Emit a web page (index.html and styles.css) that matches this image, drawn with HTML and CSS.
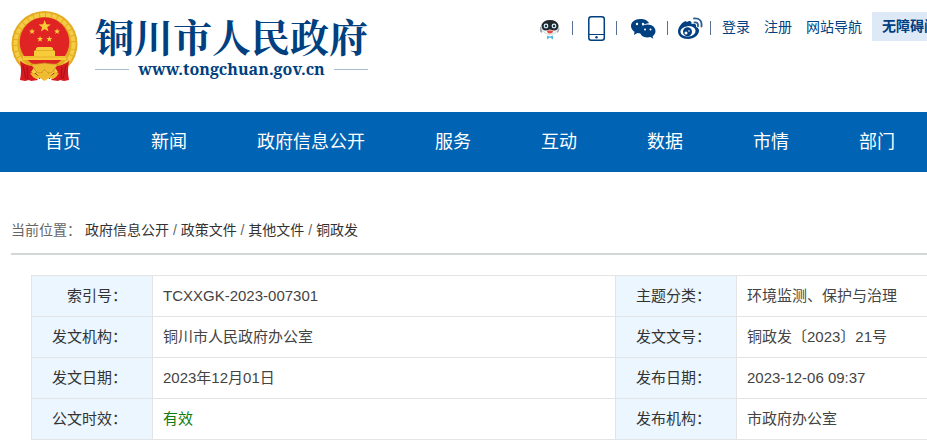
FILE: index.html
```html
<!DOCTYPE html>
<html lang="zh-CN">
<head>
<meta charset="utf-8">
<title>铜川市人民政府</title>
<link rel="stylesheet" href="styles.css">
</head>
<body>
<header class="header">
  <a class="brand" href="#">
    <svg class="emblem" viewBox="0 0 67 72" width="67" height="72" aria-hidden="true">
      <circle cx="33.500" cy="33" r="33" fill="#e3ac20"/>
      <circle cx="33.500" cy="33" r="29" fill="none" stroke="#f4cc45" stroke-width="4" stroke-dasharray="5 1"/>
      <circle cx="33.500" cy="31" r="24.800" fill="#e02323"/>
      <g fill="#f8cc39">
        <path id="star" d="M33.700 9l1.500 4.300 4.600.1-3.600 2.800 1.300 4.400-3.800-2.600-3.800 2.600 1.300-4.400-3.600-2.800 4.600-.1z"/>
        <use href="#star" transform="translate(4.200 12.800) scale(.5)"/>
        <use href="#star" transform="translate(29.200 12.800) scale(.5)"/>
        <use href="#star" transform="translate(12.200 20.400) scale(.5)"/>
        <use href="#star" transform="translate(21.500 20.400) scale(.5)"/>
        <path d="M25 37l2-1h13l2 1v2l2 1v5h11v4H12v-4h11v-5l2-1z"/>
      </g>
      <path d="M25 39.500h17M13 46h42" stroke="#dca023" stroke-width=".7"/>
      <path d="M9 50q8 6 15 5l-4 6 7 8-7 1-2-1-4 1-5-1q2-9 0-19zM58 50q-8 6-15 5l4 6-7 8 7 1 2-1 4 1 5-1q-2-9 0-19z" fill="#d71920"/>
      <path d="M12 54l3 14M16 56l1 12M55 54l-3 14M51 56l-1 12M24 62l5 6M43 62l-5 6" stroke="#a51219" fill="none"/>
      <path d="M20 53h6l7.500-1 7.500 1h6l-4 6q-2 4-6 3l-3.500-3-3.500 3q-4 1-6-3z" fill="#f0bd32" stroke="#c98320" stroke-width=".7"/>
      <path d="M19 62q5 0 8 3l6.500-4 6.500 4q3-3 8-3-2 4-6 6l-4-1-4.500 3-4.500-3-4 1q-4-2-6-6z" fill="#efbb30"/>
    </svg>
    <span class="brand-text">
      <strong class="brand-name">铜川市人民政府</strong>
      <span class="brand-url">www.tongchuan.gov.cn</span>
    </span>
  </a>
  <div class="icons">
    <a href="#" aria-label="智能问答">
      <svg width="25" height="28" viewBox="0 0 25 28">
        <path d="M1 13q-1 4 1 5M18 13q1 4-1 5" stroke="#9ba8b2" stroke-width="2" fill="none"/>
        <ellipse cx="10" cy="13.500" rx="8.500" ry="7" fill="#f4f5f5" stroke="#c3c6c9" stroke-width=".6"/>
        <path d="M1.500 11q2-5 8.500-5t8.500 5q0 5.500-4.500 5.500l-4-1-4 1q-4.500 0-4.500-5.500z" fill="#20272d"/>
        <circle cx="6" cy="12" r="2.400" fill="#d9f4fb"/><circle cx="14" cy="12" r="2.400" fill="#d9f4fb"/>
        <circle cx="6" cy="12" r="1.200" fill="#173344"/><circle cx="14" cy="12" r="1.200" fill="#173344"/>
        <path d="M7 16.500h6q0 3-3 3t-3-3z" fill="#e44842"/>
        <path d="M7 21.500l3 1 3-1v4l-3-2-3 2z" fill="#55b9e3"/>
      </svg>
    </a>
    <i class="bar"></i>
    <a href="#" aria-label="手机版">
      <svg width="29" height="28" viewBox="0 0 29 28">
        <rect x="8.800" y="2.800" width="15.500" height="23.500" rx="2.500" fill="none" stroke="#003f80" stroke-width="1.500"/>
        <path d="M9 20.500h15" stroke="#003f80"/><circle cx="16.500" cy="23.300" r="1.200" fill="#003f80"/>
      </svg>
    </a>
    <i class="bar"></i>
    <a href="#" aria-label="微信">
      <svg width="36" height="28" viewBox="0 0 36 28">
        <path d="M16 5c-5 0-9 3-9 7 0 2.500 1.500 4.500 3.500 5.700L10 21l3.300-2q1.500.4 3.700.3c-2-6 3-10.200 8-10C24 6.500 20.500 5 16 5z" fill="#003f80"/>
        <path d="M23.500 10.500c-4.400 0-7.700 2.800-7.700 6.500s3.300 6.500 7.700 6.500q1.500 0 2.800-.4l3 1.700-.7-2.600c1.700-1 2.900-2.900 2.900-5.200 0-3.700-3.600-6.500-8-6.500z" fill="#003f80"/>
        <g fill="#fff"><circle cx="13" cy="10" r="1.200"/><circle cx="19" cy="10" r="1.200"/><circle cx="21" cy="15.500" r="1"/><circle cx="26.500" cy="15.500" r="1"/></g>
      </svg>
    </a>
    <i class="bar"></i>
    <a href="#" aria-label="微博">
      <svg width="28" height="28" viewBox="0 0 28 28">
        <path d="M12 8c2-1.500 5-1.500 4.500 2 3-1 5.500 0 4.500 3 2 .6 3 2 3 3.800 0 4.200-5 8.200-11 8.200S3 22 3 17.500C3 12 10 5 12 8z" fill="#003f80"/>
        <ellipse cx="13" cy="17.300" rx="7.600" ry="5.200" transform="rotate(-6 13 17.300)" fill="#fff"/>
        <circle cx="12.500" cy="17.800" r="4.500" fill="#003f80"/><circle cx="11" cy="19" r="1.500" fill="#fff"/><circle cx="14" cy="17" r=".8" fill="#fff"/>
        <path d="M19 4.500q8.500-.5 7.500 8M19.500 8.500q4-.5 3.500 3.800" fill="none" stroke="#2b5f94" stroke-width="1.800" stroke-linecap="round"/>
      </svg>
    </a>
    <i class="bar"></i>
  </div>
  <div class="links">
    <a href="#">登录</a>
    <a href="#">注册</a>
    <a href="#">网站导航</a>
  </div>
  <button class="access" type="button">无障碍阅读</button>
</header>

<nav class="nav">
  <a href="#">首页</a>
  <a href="#">新闻</a>
  <a href="#">政府信息公开</a>
  <a href="#">服务</a>
  <a href="#">互动</a>
  <a href="#">数据</a>
  <a href="#">市情</a>
  <a href="#">部门</a>
</nav>

<main class="main">
  <div class="crumbs"><span class="crumbs-label">当前位置：</span><a href="#">政府信息公开</a> / <a href="#">政策文件</a> / <a href="#">其他文件</a> / <a href="#">铜政发</a></div>
  <table class="info">
    <colgroup><col class="col-label"><col><col class="col-label"><col></colgroup>
    <tbody>
      <tr><th scope="row">索引号：</th><td>TCXXGK-2023-007301</td><th scope="row">主题分类：</th><td>环境监测、保护与治理</td></tr>
      <tr><th scope="row">发文机构：</th><td>铜川市人民政府办公室</td><th scope="row">发文文号：</th><td>铜政发〔2023〕21号</td></tr>
      <tr><th scope="row">发文日期：</th><td>2023年12月01日</td><th scope="row">发布日期：</th><td>2023-12-06 09:37</td></tr>
      <tr><th scope="row">公文时效：</th><td class="valid">有效</td><th scope="row">发布机构：</th><td>市政府办公室</td></tr>
    </tbody>
  </table>
</main>
</body>
</html>
```
FILE: styles.css
```css
* {
  box-sizing: border-box;
}

html {
  overflow: hidden;
}

body {
  margin: 0;
  min-width: 1200px;
  background: #fff;
  color: #444;
  font-family: "Liberation Sans", "Noto Sans CJK SC", sans-serif;
  font-size: 14px;
}

a {
  color: inherit;
  text-decoration: none;
}

svg {
  display: block;
}

.header {
  display: flex;
  align-items: flex-start;
  height: 112px;
  padding: 11px 0 0 11px;
  color: #003f80;
  white-space: nowrap;
}

.brand {
  display: flex;
  flex: 0 0 529px;
  gap: 17px;
}

.brand-text {
  display: flex;
  flex-direction: column;
}

.brand-name {
  font-family: "Noto Serif CJK SC", "Noto Sans CJK SC", serif;
  font-size: 39px;
  line-height: 48px;
  font-weight: 700;
}

.brand-url {
  display: flex;
  align-items: center;
  justify-content: space-between;
  font-family: "Noto Serif", "Liberation Serif", serif;
  font-size: 16px;
  line-height: 20px;
  font-weight: 700;
}

.brand-url::before,
.brand-url::after {
  content: "";
  width: 34px;
  height: 1px;
  background: #a9bccd;
}

.icons {
  display: flex;
  align-items: center;
  gap: 7px;
  padding-top: 3px;
}

.bar {
  width: 1px;
  height: 14px;
  background: #5b6f92;
}

.links {
  display: flex;
  gap: 14px;
  margin-left: 11px;
  line-height: 32px;
}

.access {
  margin: 1px 0 0 10px;
  padding: 0 10px;
  border: 0;
  background: #dee9f7;
  color: #003f80;
  font: inherit;
  font-weight: 700;
  line-height: 29px;
}

.nav {
  display: flex;
  padding-left: 10px;
  background: #0063b3;
  color: #fff;
  font-size: 18px;
  line-height: 60px;
}

.nav a {
  padding: 0 35px;
}

.main {
  padding-top: 48px;
}

.crumbs {
  margin-left: 11px;
  padding-bottom: 13px;
  border-bottom: 2px solid #d3d7d7;
  color: #666;
  line-height: 20px;
}

.crumbs a {
  color: #333;
}

.crumbs-label {
  margin-right: 4px;
}

.info {
  width: calc(100% - 31px);
  margin: 20px 0 0 31px;
  border-collapse: collapse;
  table-layout: fixed;
  font-size: 15px;
  line-height: 20px;
}

.col-label {
  width: 121px;
}

.info th,
.info td {
  height: 41px;
  padding: 0 10px;
  border: 1px solid #e2e4e6;
  text-align: left;
  font-weight: 400;
}

.info th {
  padding: 0 25px 0 0;
  background: #ebf6ff;
  color: #333;
  text-align: right;
}

.info .valid {
  color: #107c10;
}
```
